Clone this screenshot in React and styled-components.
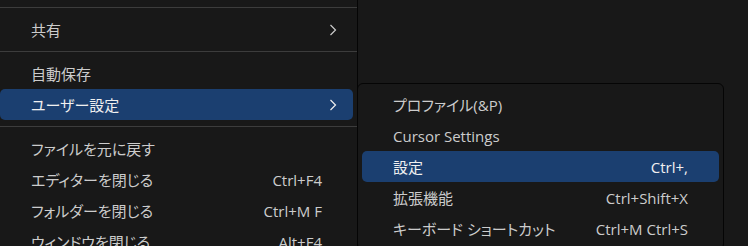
import React from 'react'
import styled, { createGlobalStyle } from 'styled-components'

const GlobalStyle = createGlobalStyle`
  html, body {
    margin: 0;
    padding: 0;
    background: #181818;
    overflow: hidden;
  }
  body {
    font-family: "Open Sans", "Noto Sans CJK JP", sans-serif;
    font-feature-settings: "palt";
  }
`

const mainItems = [
  { type: 'sep' },
  { label: '共有', sub: true },
  { type: 'sep' },
  { label: '自動保存' },
  { label: 'ユーザー設定', sub: true, active: true },
  { type: 'sep' },
  { label: 'ファイルを元に戻す' },
  { label: 'エディターを閉じる', keys: 'Ctrl+F4' },
  { label: 'フォルダーを閉じる', keys: 'Ctrl+M F' },
  { label: 'ウィンドウを閉じる', keys: 'Alt+F4' },
]

const subItems = [
  { label: 'プロファイル(&P)' },
  { label: 'Cursor Settings' },
  { label: '設定', keys: 'Ctrl+,', active: true },
  { label: '拡張機能', keys: 'Ctrl+Shift+X' },
  { label: 'キーボード ショートカット', keys: 'Ctrl+M Ctrl+S' },
]

function Chevron() {
  return (
    <ChevronSvg width="8" height="12" viewBox="0 0 8 12">
      <polyline points="1.5,1 6.5,6 1.5,11" fill="none" stroke="currentColor" strokeWidth="1.2" />
    </ChevronSvg>
  )
}

function MenuList({ items }) {
  return items.map((it, i) =>
    it.type === 'sep' ? (
      <Separator key={i} />
    ) : (
      <Item key={i} $active={it.active}>
        <Label>{it.label}</Label>
        {it.keys && <Keys>{it.keys}</Keys>}
        {it.sub && <Chevron />}
      </Item>
    )
  )
}

export default function App() {
  return (
    <>
      <GlobalStyle />
      <Screen>
        <MainMenu>
          <MenuList items={mainItems} />
        </MainMenu>
        <SubMenu>
          <MenuList items={subItems} />
        </SubMenu>
      </Screen>
    </>
  )
}

const Screen = styled.div`
  display: flex;
  align-items: flex-start;
  width: 748px;
  height: 246px;
  overflow: hidden;
`

const MainMenu = styled.div`
  box-sizing: border-box;
  flex: none;
  width: 362px;
  margin-left: -4px;
  padding: 1px 4px 0 4px;
  height: 300px;
  background: #181818;
  border-right: 1px solid #050505;
`

const SubMenu = styled.div`
  box-sizing: border-box;
  flex: none;
  width: 367px;
  margin-left: -1px;
  margin-top: 83px;
  padding: 5px 4px;
  background: #181818;
  border: 1px solid #050505;
  border-radius: 6px;
`

const Separator = styled.div`
  height: 1px;
  margin: 6px -4px;
  background: #3c3c3c;
`

const Item = styled.div`
  display: flex;
  align-items: center;
  height: 31px;
  padding: 0 16px 0 31px;
  border-radius: 5px;
  font-size: 15px;
  color: ${p => (p.$active ? '#f0f0f0' : '#cccccc')};
  background: ${p => (p.$active ? '#1b3f70' : 'transparent')};
  white-space: nowrap;
`

const Label = styled.span`
  flex: 1;
`

const Keys = styled.span`
  margin-right: 15px;
`

const ChevronSvg = styled.svg`
  display: block;
  flex: none;
`
